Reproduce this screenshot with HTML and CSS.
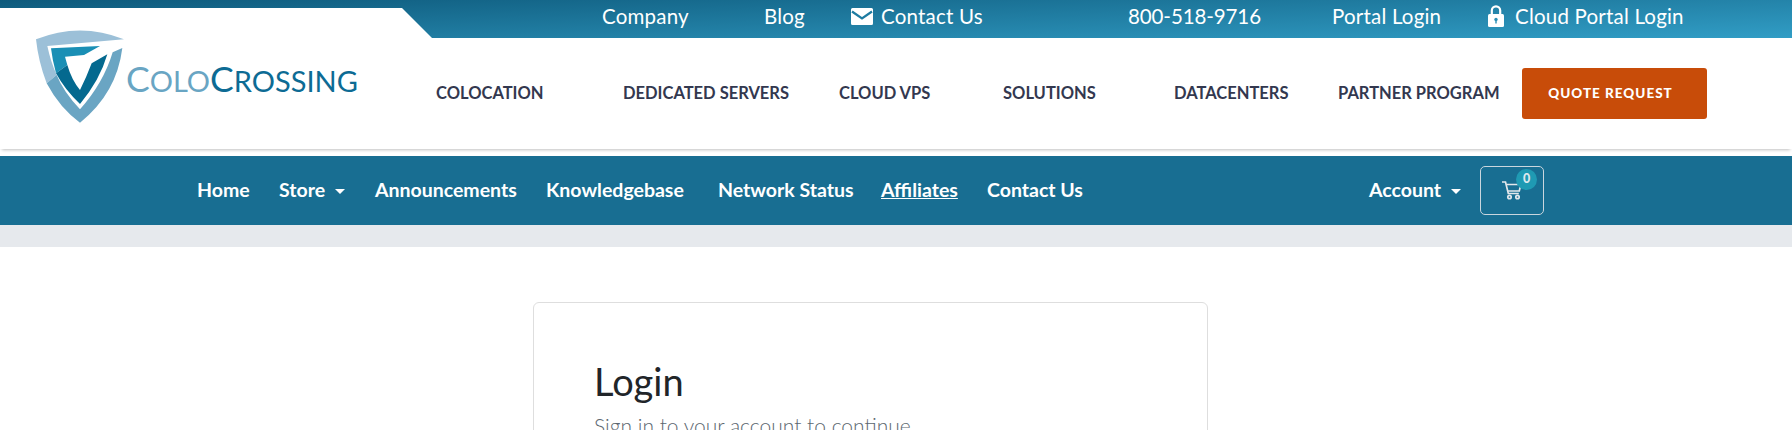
FILE: index.html
```html
<!DOCTYPE html>
<html lang="en">
<head>
    <meta charset="UTF-8">
    <title>Client Area - ColoCrossing</title>
    <link rel="stylesheet" href="styles.css">
</head>
<body>
    <div class="topbar">
        <a class="top-link" href="#">Company</a>
        <a class="top-link" href="#">Blog</a>
        <a class="top-link" href="#">
            <svg class="top-icon" width="22" height="17" viewBox="0 0 22 17"><path fill="#fff" d="M1.5 0h19A1.5 1.5 0 0 1 22 1.500V15.500A1.500 1.500 0 0 1 20.500 17h-19A1.500 1.500 0 0 1 0 15.500V1.500A1.500 1.500 0 0 1 1.500 0z"/><path fill="none" stroke="#1d7ba1" stroke-width="2.200" d="M1 3.500l10 7 10-7"/></svg>
            Contact Us
        </a>
        <a class="top-link top-phone" href="#">800-518-9716</a>
        <a class="top-link" href="#">Portal Login</a>
        <a class="top-link" href="#">
            <svg class="top-icon lock-icon" width="16" height="22" viewBox="0 0 16 22"><path fill="none" stroke="#fff" stroke-width="2.200" d="M3.800 10V5.500a4.200 4.200 0 0 1 8.400 0V10"/><rect fill="#fff" y="9" width="16" height="13" rx="1.500"/><circle fill="#2b8fb6" cx="8" cy="14.500" r="1.700"/><rect fill="#2b8fb6" x="7.300" y="15" width="1.400" height="3.500"/></svg>
            Cloud Portal Login
        </a>
    </div>

    <header class="site-header">
        <a class="logo" href="#">
            <svg width="105" height="110" viewBox="0 0 315 330">
                <path fill="#9cc0d8" d="M48 58Q180 5 312 58L82 78Q92 125 110 165L80 190Q55 125 48 58z"/>
                <path fill="#6aa5c3" d="M80 190L110 165Q130 215 180 268Q250 190 278 97L307 84Q290 220 180 308Q120 265 80 190z"/>
                <path fill="#1a8fb5" d="M93 85L240 78L192 105L135 110L142 135L108 160Q97 120 93 85z"/>
                <path fill="#04698f" d="M108 160L142 135Q155 180 180 210Q200 170 215 130L262 103Q240 180 180 252Q135 210 108 160z"/>
            </svg>
            <span class="logo-text"><span class="logo-colo"><b>C</b>OLO</span><span class="logo-crossing"><b>C</b>ROSSING</span></span>
        </a>
        <nav class="main-nav">
            <a href="#">COLOCATION</a>
            <a href="#">DEDICATED SERVERS</a>
            <a href="#">CLOUD VPS</a>
            <a href="#">SOLUTIONS</a>
            <a href="#">DATACENTERS</a>
            <a href="#">PARTNER PROGRAM</a>
        </nav>
        <a class="quote-btn" href="#">QUOTE REQUEST</a>
    </header>

    <nav class="store-nav">
        <ul class="store-links">
            <li><a href="#">Home</a></li>
            <li><a href="#">Store<span class="caret"></span></a></li>
            <li><a href="#">Announcements</a></li>
            <li><a href="#">Knowledgebase</a></li>
            <li><a href="#">Network Status</a></li>
            <li><a class="active" href="#">Affiliates</a></li>
            <li><a href="#">Contact Us</a></li>
        </ul>
        <a class="account-link" href="#">Account<span class="caret"></span></a>
        <a class="cart-btn" href="#">
            <svg width="20" height="19" viewBox="0 0 20 19" fill="none" stroke="#e3e8ec" stroke-width="1.700"><path d="M0 1h3.500l2.800 11.500h10.500"/><path d="M4.200 3.500h14.600l-1.500 6.500H5.700"/><circle cx="7.500" cy="16" r="1.700"/><circle cx="15.500" cy="16" r="1.700"/></svg>
            <span class="cart-badge">0</span>
        </a>
    </nav>
    <div class="strip"></div>

    <main class="content">
        <div class="login-card">
            <h1>Login</h1>
            <p>Sign in to your account to continue</p>
        </div>
    </main>
</body>
</html>
```

FILE: styles.css
```css
html, body {
    height: 430px;
    overflow: hidden;
}

body {
    margin: 0;
    font-family: 'Lato', sans-serif;
    background: #fff;
}

a {
    color: inherit;
    text-decoration: none;
}

.topbar {
    position: relative;
    height: 38px;
    display: grid;
    grid-template-columns: 162px 87px 277px 204px 156px auto;
    align-items: center;
    padding-left: 602px;
    padding-bottom: 6px;
    box-sizing: border-box;
    background: linear-gradient(178deg, #0e5a7c 0%, #319dc5 100%);
    color: #fff;
    font-size: 20.500px;
    letter-spacing: 0.2px;
}

.topbar::before {
    content: "";
    position: absolute;
    left: 0;
    top: 8px;
    width: 432px;
    height: 30px;
    background: #fff;
    clip-path: polygon(0 0, 402px 0, 100% 100%, 0 100%);
}

.top-link {
    display: flex;
    align-items: center;
    white-space: nowrap;
}

.top-phone {
    letter-spacing: -0.1px;
}

.top-icon {
    margin-right: 8px;
}

.lock-icon {
    margin-right: 11px;
}

.site-header {
    position: relative;
    height: 111px;
    display: flex;
    align-items: flex-start;
    background: #fff;
    box-shadow: 0 3px 3px -2px rgba(0, 0, 0, 0.25);
}

.logo {
    display: flex;
    align-items: center;
    width: 436px;
    height: 110px;
    margin-top: -18px;
    padding-left: 20px;
    box-sizing: border-box;
}

.logo-text {
    margin: 8px 0 0 1px;
    font-size: 29px;
    line-height: 1;
    white-space: nowrap;
}

.logo-text b {
    font-size: 35.500px;
    font-weight: 400;
}

.logo-colo {
    color: #69a5c3;
}

.logo-crossing {
    color: #0d6b94;
}

.main-nav {
    display: grid;
    grid-template-columns: 187px 216px 164px 171px 164px 184px;
    align-items: center;
    height: 110px;
    color: #33384f;
    font-size: 16.500px;
    font-weight: 700;
    white-space: nowrap;
}

.quote-btn {
    display: flex;
    align-items: center;
    justify-content: center;
    width: 185px;
    height: 51px;
    margin-top: 30px;
    padding: 0 8px 2px 0;
    box-sizing: border-box;
    border-radius: 3px;
    background: #c84c09;
    color: #fff;
    font-size: 13.500px;
    font-weight: 900;
    letter-spacing: 1px;
}

.store-nav {
    display: flex;
    align-items: center;
    height: 69px;
    margin-top: 7px;
    padding-left: 197px;
    padding-bottom: 2px;
    box-sizing: border-box;
    background: #186e92;
    color: #fff;
    font-size: 19.500px;
    font-weight: 700;
}

.store-links {
    display: grid;
    grid-template-columns: 82px 96px 171px 172px 163px 106px auto;
    width: 1172px;
    margin: 0;
    padding: 0;
    list-style: none;
}

.active {
    text-decoration: underline;
}

.caret {
    display: inline-block;
    margin-left: 10px;
    vertical-align: 3px;
    border-top: 5px solid #fff;
    border-left: 5px solid transparent;
    border-right: 5px solid transparent;
}

.account-link {
    width: 111px;
}

.cart-btn {
    position: relative;
    display: flex;
    align-items: center;
    justify-content: center;
    width: 64px;
    height: 49px;
    box-sizing: border-box;
    margin-top: 2px;
    border: 1px solid #c9d6de;
    border-radius: 5px;
}

.cart-badge {
    position: absolute;
    top: 2px;
    left: 35px;
    width: 21px;
    height: 21px;
    border-radius: 50%;
    background: #1f9ab3;
    color: #dfe9ee;
    font-size: 12.500px;
    font-weight: 900;
    line-height: 20px;
    text-align: center;
}

.strip {
    height: 22px;
    background: #e6e9ed;
}

.content {
    padding: 55px 0 0 533px;
}

.login-card {
    width: 675px;
    height: 400px;
    box-sizing: border-box;
    padding: 55px 60px;
    border: 1px solid #dedede;
    border-radius: 6px;
}

.login-card h1 {
    margin: 0;
    color: #212529;
    font-size: 38px;
    font-weight: 400;
    line-height: 46px;
}

.login-card p {
    margin: 7px 0 0;
    color: #5c6770;
    font-size: 21px;
    font-weight: 300;
    line-height: 30px;
}
```
